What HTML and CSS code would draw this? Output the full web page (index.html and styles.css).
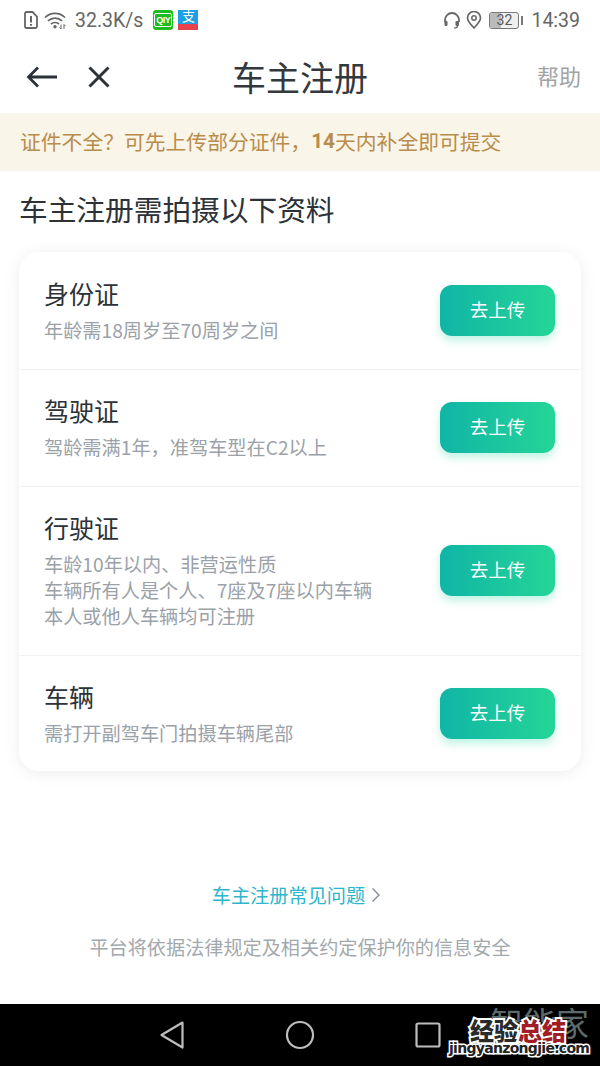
FILE: index.html
```html
<!DOCTYPE html>
<html lang="zh-CN">
<head>
<meta charset="utf-8">
<title>车主注册</title>
<link rel="stylesheet" href="styles.css">
</head>
<body>
<div class="page">
  <div class="status">
    <div class="status-group">
      <svg class="ic-sim" viewBox="0 0 14 18" width="14" height="18"><path d="M2.5 1h6L13 5.500V15.500a1.500 1.500 0 0 1-1.500 1.500h-9A1.500 1.500 0 0 1 1 15.500V2.500A1.500 1.500 0 0 1 2.500 1z" fill="none" stroke="#666" stroke-width="1.800"/><path d="M7 5v6.500M7 13v1.800" stroke="#666" stroke-width="2"/></svg>
      <svg class="ic-wifi" viewBox="0 0 24 18" width="24" height="18"><path d="M1 6.500C6.500 1 15.500 1 21 6.500M4 9.800c3.800-3.700 10.200-3.700 14 0M7 13c2.200-2 5.800-2 8 0" fill="none" stroke="#666" stroke-width="1.700"/><circle cx="11" cy="15.800" r="1.700" fill="#666"/><path d="M17 13.500v4.500l-1.500-1.500M20 18v-4.500l1.500 1.500" fill="none" stroke="#666" stroke-width="1"/></svg>
      <span class="speed">32.3K/s</span>
      <span class="app-iqiyi"><span class="app-iqiyi-text">QIY</span></span>
      <span class="app-ali"><span class="app-ali-top">支</span><span class="app-ali-bottom"></span></span>
    </div>
    <div class="status-group status-right">
      <svg viewBox="0 0 18 18" width="18" height="18"><path d="M2 11V9a7 7 0 0 1 14 0v2" fill="none" stroke="#666" stroke-width="1.800"/><rect x="1.500" y="10" width="3" height="5" rx="1.200" fill="#666"/><rect x="12.500" y="10" width="3.500" height="5" rx="1.200" fill="#666"/><path d="M14.500 15c0 1.500-1.500 2-3.500 2" fill="none" stroke="#666" stroke-width="1.200"/></svg>
      <svg viewBox="0 0 16 18" width="16" height="18"><path d="M8 17C4 12.800 1.500 10 1.500 7a6.500 6.500 0 0 1 13 0C14.500 10 12 12.800 8 17z" fill="none" stroke="#666" stroke-width="1.700"/><circle cx="8" cy="7" r="2.200" fill="none" stroke="#666" stroke-width="1.500"/></svg>
      <span class="battery"><span class="battery-fill"></span><span class="battery-num">32</span></span><span class="battery-tip"></span>
      <span class="time">14:39</span>
    </div>
  </div>

  <header class="nav">
    <div class="nav-left">
      <svg viewBox="0 0 32 24" width="32" height="24"><path d="M31 12H3M12 2.500L2.500 12l9.500 9.500" fill="none" stroke="#2c3238" stroke-width="2.800"/></svg>
      <svg viewBox="0 0 24 24" width="24" height="24"><path d="M2.500 2.500l19 19M21.500 2.500l-19 19" fill="none" stroke="#2c3238" stroke-width="3"/></svg>
    </div>
    <h1 class="nav-title">车主注册</h1>
    <span class="nav-help">帮助</span>
  </header>

  <div class="banner">证件不全&#xFF1F;可先上传部分证件&#xFF0C;<b class="banner-strong">14</b>天内补全即可提交</div>

  <main class="main">
    <h2 class="heading">车主注册需拍摄以下资料</h2>
    <section class="card">
      <div class="row row-1">
        <div class="row-text">
          <div class="row-name">身份证</div>
          <div class="row-desc">年龄需18周岁至70周岁之间</div>
        </div>
        <button class="btn">去上传</button>
      </div>
      <div class="row row-2">
        <div class="row-text">
          <div class="row-name">驾驶证</div>
          <div class="row-desc">驾龄需满1年&#xFF0C;准驾车型在C2以上</div>
        </div>
        <button class="btn">去上传</button>
      </div>
      <div class="row row-3">
        <div class="row-text">
          <div class="row-name">行驶证</div>
          <div class="row-desc">车龄10年以内、非营运性质<br>车辆所有人是个人、7座及7座以内车辆<br>本人或他人车辆均可注册</div>
        </div>
        <button class="btn">去上传</button>
      </div>
      <div class="row row-4">
        <div class="row-text">
          <div class="row-name">车辆</div>
          <div class="row-desc">需打开副驾车门拍摄车辆尾部</div>
        </div>
        <button class="btn">去上传</button>
      </div>
    </section>
    <div class="footer">
      <a class="faq">车主注册常见问题<svg class="faq-arrow" viewBox="0 0 10 16" width="10" height="16"><path d="M1.500 1.500L8 8l-6.500 6.500" fill="none" stroke="#7f8a92" stroke-width="1.300"/></svg></a>
      <p class="safe">平台将依据法律规定及相关约定保护你的信息安全</p>
    </div>
  </main>

  <nav class="sysbar">
    <svg viewBox="0 0 26 30" width="26" height="30"><path d="M23.500 2.500L2.500 15l21 12.500z" fill="none" stroke="#bdbdbd" stroke-width="2.200" stroke-linejoin="round"/></svg>
    <svg viewBox="0 0 30 30" width="30" height="30"><circle cx="15" cy="15" r="13" fill="none" stroke="#bdbdbd" stroke-width="2.200"/></svg>
    <svg viewBox="0 0 26 26" width="26" height="26"><rect x="1.500" y="1.500" width="23" height="23" rx="1.500" fill="none" stroke="#bdbdbd" stroke-width="2.200"/></svg>
  </nav>

  <div class="wm">
    <span class="wm-back">智能家</span>
    <span class="wm-main"><span class="wm-white">经验</span><span class="wm-red">总结</span></span>
    <span class="wm-url">jingyanzongjie.com</span>
  </div>
</div>
</body>
</html>
```

FILE: styles.css
```css
* { box-sizing: border-box; }
html, body { margin: 0; padding: 0; background: #fff; }
.page {
  position: relative;
  width: 600px;
  height: 1066px;
  display: flex;
  flex-direction: column;
  overflow: hidden;
  font-family: "Noto Sans CJK SC", "Noto Sans", sans-serif;
  color: #2c3238;
}

/* status bar */
.status {
  height: 40px;
  flex: none;
  display: flex;
  justify-content: space-between;
  align-items: center;
  padding: 0 20px 0 24px;
  color: #666;
  font-family: Roboto, sans-serif;
  font-size: 19.500px;
}
.status-group { display: flex; align-items: center; }
.ic-wifi { margin-left: 6px; }
.speed { margin-left: 7px; }
.app-iqiyi {
  margin-left: 10px;
  width: 20px; height: 20px;
  background: #1fbc21;
  border-radius: 3px;
  display: flex; align-items: center; justify-content: center;
}
.app-iqiyi-text {
  font-family: "Liberation Sans", sans-serif;
  font-size: 9px; font-weight: 700; color: #fff;
  line-height: 12px; border: 1px solid #fff; border-radius: 2px; padding: 0 1px;
  letter-spacing: -0.500px;
}
.app-ali {
  margin-left: 5px;
  width: 20px; height: 20px;
  background: #1d9fe6;
  display: flex; flex-direction: column; align-items: center;
  overflow: hidden;
}
.app-ali-top { height: 14px; font-size: 13px; line-height: 14px; color: #fff; }
.app-ali-bottom { height: 6px; width: 100%; background: #e8424d; }
.status-right svg { margin-right: 5px; }
.status-right svg:nth-child(2) { margin-right: 7px; }
.battery {
  position: relative;
  width: 30px; height: 17px;
  border: 1px solid #777;
  border-radius: 3px;
  background: #efefef;
  display: flex; align-items: center; justify-content: center;
  overflow: hidden;
}
.battery-fill { position: absolute; left: 0; top: 0; bottom: 0; width: 11px; background: #bbb; }
.battery-num { position: relative; font-size: 14px; line-height: 15px; color: #555; }
.battery-tip { width: 2px; height: 9px; background: #777; margin-left: 2px; }
.time { margin-left: 8px; }

/* nav */
.nav {
  height: 73px;
  flex: none;
  position: relative;
  display: flex;
  justify-content: space-between;
  align-items: center;
  padding: 0 19px 0 26px;
}
.nav-left { display: flex; align-items: center; gap: 29px; }
.nav-title {
  position: absolute;
  left: 0; right: 0;
  margin: 0;
  text-align: center;
  font-size: 34px;
  font-weight: 400;
  line-height: 46px;
  color: #33383c;
}
.nav-help { font-size: 22px; line-height: 30px; color: #a3a3a3; padding-bottom: 3px; }

/* banner */
.banner {
  height: 58px;
  flex: none;
  display: flex;
  align-items: center;
  padding: 0 0 3px 20px;
  background: #faf5e9;
  color: #b88d4c;
  font-size: 20.800px;
  white-space: pre;
}
.banner-strong { font-weight: 700; font-family: Roboto, sans-serif; }

/* main */
.main { flex: 1; display: flex; flex-direction: column; padding: 0 19px; }
.heading {
  margin: 17px 0 23px 0;
  font-size: 28.700px;
  font-weight: 400;
  line-height: 41px;
  color: #2c3238;
}
.card {
  background: #fff;
  border-radius: 20px;
  box-shadow: 0 2px 16px rgba(40, 50, 60, 0.09);
  display: flex;
  flex-direction: column;
}
.row {
  display: flex;
  justify-content: space-between;
  align-items: center;
  padding: 0 26px 0 25px;
  border-bottom: 1px solid #f3f3f3;
}
.row-1 { height: 118px; }
.row-2 { height: 117px; padding-bottom: 1px; }
.row-3 { height: 169px; padding-bottom: 1px; }
.row-4 { height: 115px; border-bottom: 0; }
.row-text { padding-bottom: 4px; }
.row-name { font-size: 25px; line-height: 36px; color: #2c3238; }
.row-desc { margin-top: 6px; font-size: 19.200px; line-height: 26px; color: #9ba1a8; }
.btn {
  width: 115px;
  height: 51px;
  border: 0;
  border-radius: 12px;
  background: linear-gradient(90deg, #10b5a6, #25d597);
  box-shadow: 0 5px 9px rgba(50, 220, 170, 0.3);
  color: #fff;
  font-family: inherit;
  font-size: 18.500px;
  padding: 0 0 3px;
}
.footer { margin-top: 110px; display: flex; flex-direction: column; align-items: center; }
.faq {
  display: flex;
  align-items: center;
  margin-right: 7px;
  font-size: 19.200px;
  line-height: 28px;
  color: #2eb6cc;
}
.faq-arrow { margin-left: 6px; }
.safe { margin: 24px 0 0; font-size: 19.150px; line-height: 28px; color: #a3a8ad; }

/* system bar */
.sysbar {
  height: 62px;
  flex: none;
  background: #000;
  display: flex;
  align-items: center;
  justify-content: space-between;
  padding: 0 159px 0 159px;
}

/* watermark overlay */
.wm {
  position: absolute;
  left: 448px;
  top: 1002px;
  width: 150px;
  height: 64px;
}
.wm-back {
  position: absolute;
  left: 42px; top: 0;
  font-size: 33px;
  line-height: 40px;
  color: #5c6a6c;
  white-space: nowrap;
}
.wm-main {
  position: absolute;
  left: 22px; top: 13px;
  font-size: 24px;
  line-height: 30px;
  font-weight: 900;
  white-space: nowrap;
  -webkit-text-stroke: 4px #fff;
  paint-order: stroke fill;
}
.wm-white { color: #2a2a2a; }
.wm-red { color: #a01d26; }
.wm-url {
  position: absolute;
  left: 1px; top: 36px;
  font-family: "DejaVu Sans", sans-serif;
  font-size: 14px;
  font-weight: 700;
  line-height: 20px;
  letter-spacing: -0.700px;
  color: #222;
  -webkit-text-stroke: 3px #fff;
  paint-order: stroke fill;
  white-space: nowrap;
}
```
